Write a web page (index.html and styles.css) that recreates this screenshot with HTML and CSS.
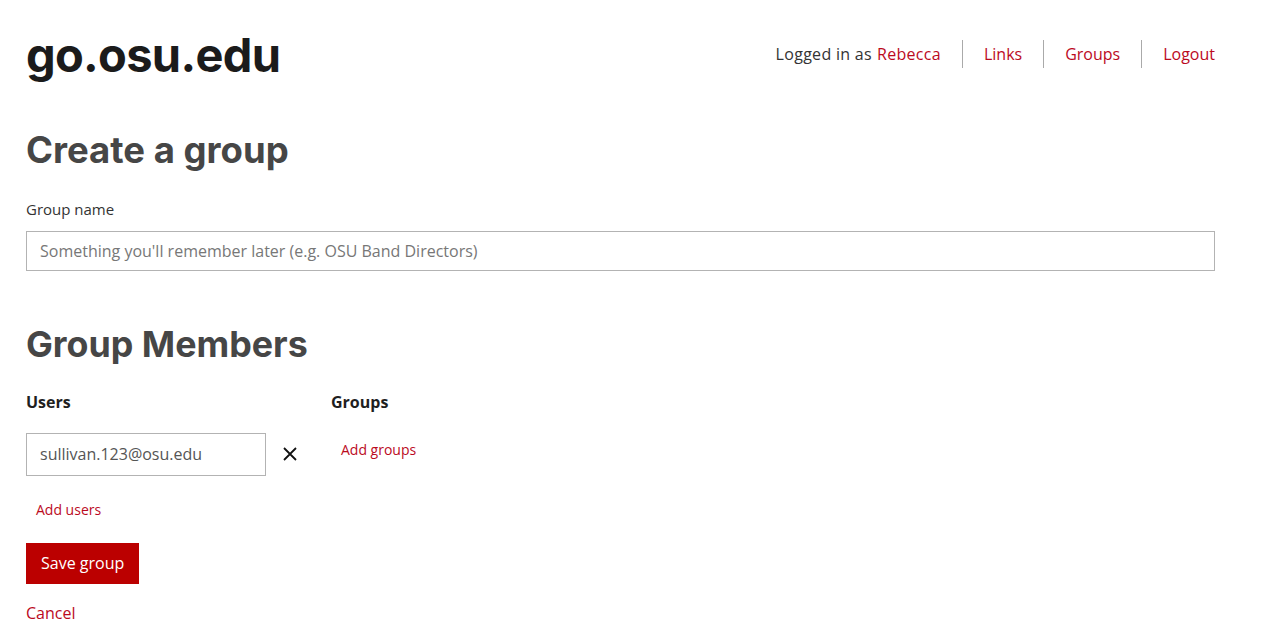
FILE: index.html
```html
<!DOCTYPE html>
<html lang="en">
<head>
<meta charset="utf-8">
<title>Create a group - go.osu.edu</title>
<link rel="stylesheet" href="styles.css">
</head>
<body>
<div class="page">
  <header class="site-header">
    <a class="logo" href="#">go.osu.edu</a>
    <nav class="user-nav">
      <span class="nav-item">Logged in as <a href="#">Rebecca</a></span>
      <a class="nav-item" href="#">Links</a>
      <a class="nav-item" href="#">Groups</a>
      <a class="nav-item" href="#">Logout</a>
    </nav>
  </header>

  <main>
    <h1 class="section-title">Create a group</h1>
    <label class="field-label" for="group-name">Group name</label>
    <input class="text-input wide" id="group-name" type="text" placeholder="Something you'll remember later (e.g. OSU Band Directors)">

    <h2 class="section-title members-title">Group Members</h2>
    <div class="members">
      <div class="member-col users-col">
        <div class="col-title">Users</div>
        <div class="user-row">
          <input class="text-input user-input" type="text" value="sullivan.123@osu.edu">
          <button class="remove-btn" type="button" aria-label="Remove">
            <svg width="14" height="14" viewBox="0 0 14 14"><path d="M1 1L13 13M13 1L1 13" stroke="#111" stroke-width="1.8" fill="none"/></svg>
          </button>
        </div>
        <a class="add-link add-users" href="#">Add users</a>
      </div>
      <div class="member-col groups-col">
        <div class="col-title">Groups</div>
        <a class="add-link add-groups" href="#">Add groups</a>
      </div>
    </div>

    <button class="save-btn" type="submit">Save group</button>
    <a class="cancel-link" href="#">Cancel</a>
  </main>
</div>
</body>
</html>
```

FILE: styles.css
```css
* { box-sizing: border-box; }

body {
  margin: 0;
  font-family: "Open Sans", "Liberation Sans", sans-serif;
  color: #333;
  background: #fff;
}

a { color: #bb0a1e; text-decoration: none; }

.page {
  width: 1189px;
  margin-left: 26px;
}

.site-header {
  display: flex;
  justify-content: space-between;
  align-items: center;
  height: 108px;
}

.logo {
  font-family: "Inter", sans-serif;
  font-weight: 700;
  font-size: 47px;
  letter-spacing: -0.7px;
  color: #1b1b1b;
}

.user-nav {
  display: flex;
  align-items: center;
  font-size: 16px;
}

.nav-item {
  display: flex;
  align-items: center;
  height: 28px;
  padding: 0 21px;
  border-left: 1px solid #aaa;
}
.nav-item:first-child { border-left: none; padding-left: 0; letter-spacing: 0.3px; }
.nav-item:last-child { padding-right: 0; }
span.nav-item { color: #333; }
span.nav-item a { margin-left: 5px; }

.section-title {
  font-family: "Inter", sans-serif;
  font-weight: 700;
  font-size: 36.5px;
  color: #464646;
  margin: 0;
  line-height: 1.2;
}
h1.section-title { padding-top: 21px; }
h2.section-title { font-size: 35.8px; }

.field-label {
  display: block;
  margin-top: 26px;
  font-size: 15px;
  color: #333;
}

.text-input {
  font-family: inherit;
  font-size: 16px;
  color: #555;
  border: 1px solid #b3b3b3;
  background: #fff;
  padding: 0 13px;
  outline: none;
}
.text-input::placeholder { color: #777; }

.wide {
  display: block;
  width: 100%;
  height: 40px;
  margin-top: 12px;
}

.members-title { margin-top: 52px; }

.members {
  display: flex;
  margin-top: 25px;
}

.users-col { width: 305px; }

.col-title {
  font-weight: 700;
  font-size: 16px;
  color: #1f1f1f;
}

.user-row {
  display: flex;
  align-items: center;
  margin-top: 20px;
}

.user-input {
  width: 240px;
  height: 43px;
}

.remove-btn {
  border: none;
  background: none;
  padding: 0;
  margin-left: 17px;
  display: flex;
  cursor: pointer;
}

.add-link {
  display: inline-block;
  font-size: 14px;
}
.add-users { margin: 24px 0 0 10px; }
.add-groups { margin: 27px 0 0 10px; }

.save-btn {
  display: block;
  margin-top: 23px;
  height: 41px;
  padding: 0 15px;
  background: #bb0000;
  border: none;
  color: #fff;
  font-family: inherit;
  font-size: 16px;
}

.cancel-link {
  display: inline-block;
  margin-top: 18px;
  font-size: 16px;
}
```
